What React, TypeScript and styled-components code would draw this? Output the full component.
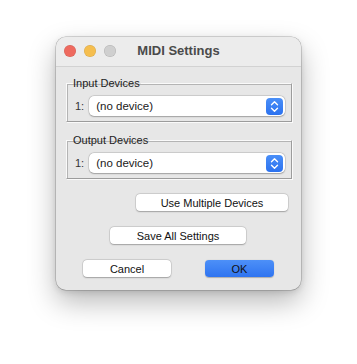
import React from "react";
import styled, { createGlobalStyle } from "styled-components";

const Global = createGlobalStyle`
  html, body { margin: 0; padding: 0; background: #ffffff; }
  body { font-family: "Liberation Sans", Arial, sans-serif; -webkit-font-smoothing: antialiased; }
`;

const Page = styled.div`
  width: 357px;
  height: 364px;
  padding: 37px 0 0 56px;
  box-sizing: border-box;
`;

const Window = styled.div`
  width: 245px;
  height: 253px;
  box-sizing: border-box;
  background: #e7e7e7;
  border-radius: 10px;
  box-shadow: 0 0 0 0.5px rgba(0,0,0,0.28), 0 12px 28px rgba(0,0,0,0.28), 0 2px 6px rgba(0,0,0,0.12);
  overflow: hidden;
  display: flex;
  flex-direction: column;
`;

const TitleBar = styled.div`
  height: 29px;
  flex: none;
  background: #ececec;
  border-bottom: 1px solid #d2d2d2;
  display: flex;
  align-items: center;
  position: relative;
  padding-left: 8px;
  gap: 8px;
`;

const Light = styled.span<{ $c: string; $b: string }>`
  width: 12px;
  height: 12px;
  border-radius: 50%;
  background: ${(p) => p.$c};
  box-shadow: inset 0 0 0 0.5px ${(p) => p.$b};
  margin-top: -2px;
`;

const Title = styled.div`
  position: absolute;
  left: 0;
  right: 0;
  top: 0;
  bottom: 0;
  display: flex;
  align-items: center;
  justify-content: center;
  font-weight: bold;
  font-size: 13px;
  color: #4a4a4a;
  pointer-events: none;
  padding-bottom: 3px;
`;

const Body = styled.div`
  flex: 1;
  padding: 10px 9px 0 10px;
  display: flex;
  flex-direction: column;
`;

const Group = styled.fieldset`
  margin: 0 0 12px 0;
  padding: 6px 6px 5px 8px;
  border: 1px solid;
  border-color: #fafafa #9c9c9c #9c9c9c #fafafa;
  box-shadow: inset 1px 1px 0 #b4b4b4, 1px 1px 0 #fafafa;
  display: flex;
  align-items: center;
  gap: 5px;
  min-width: 0;
`;

const Legend = styled.legend`
  padding: 0 1px 0 0;
  margin-left: -2px;
  font-size: 11px;
  color: #222;
  line-height: 13px;
`;

const Index = styled.span`
  font-size: 11px;
  color: #333;
  flex: none;
`;

const Popup = styled.div`
  flex: 1;
  height: 20px;
  background: #ffffff;
  border-radius: 5px;
  box-shadow: 0 0 0 0.5px rgba(0,0,0,0.15), 0 0.5px 1.5px rgba(0,0,0,0.25);
  display: flex;
  align-items: center;
  justify-content: space-between;
  padding: 0 2px 0 7px;
  font-size: 11.5px;
  color: #1a1a1a;
`;

const Stepper = styled.span`
  width: 17px;
  height: 17px;
  border-radius: 4px;
  background: linear-gradient(#4a8ff8, #2c72ef);
  display: flex;
  align-items: center;
  justify-content: center;
`;

const Row = styled.div<{ $pl: number; $mt: number }>`
  display: flex;
  padding-left: ${(p) => p.$pl}px;
  margin-top: ${(p) => p.$mt}px;
  gap: 34px;
`;

const Button = styled.button<{ $w: number; $primary?: boolean }>`
  width: ${(p) => p.$w}px;
  height: 17px;
  border: none;
  border-radius: 4px;
  padding: 0;
  font-family: "Liberation Sans", Arial, sans-serif;
  font-size: 11px;
  color: #111;
  background: ${(p) => (p.$primary ? "linear-gradient(#4d90f8, #2f74f0)" : "#ffffff")};
  box-shadow: ${(p) =>
    p.$primary
      ? "0 0.5px 1px rgba(0,0,0,0.25)"
      : "0 0 0 0.5px rgba(0,0,0,0.14), 0 0.5px 1.5px rgba(0,0,0,0.25)"};
`;

function Chevrons() {
  return (
    <svg width="9" height="13" viewBox="0 0 9 13" fill="none">
      <path d="M1.5 4.8 L4.5 1.8 L7.5 4.8" stroke="#fff" strokeWidth="1.4" strokeLinecap="round" strokeLinejoin="round" />
      <path d="M1.5 8.2 L4.5 11.2 L7.5 8.2" stroke="#fff" strokeWidth="1.4" strokeLinecap="round" strokeLinejoin="round" />
    </svg>
  );
}

function DeviceGroup({ title }: { title: string }) {
  return (
    <Group>
      <Legend>{title}</Legend>
      <Index>1:</Index>
      <Popup>
        <span>(no device)</span>
        <Stepper>
          <Chevrons />
        </Stepper>
      </Popup>
    </Group>
  );
}

export default function App() {
  return (
    <>
      <Global />
      <Page>
        <Window>
          <TitleBar>
            <Light $c="#ee6a5f" $b="rgba(0,0,0,0.12)" />
            <Light $c="#f5be4f" $b="rgba(0,0,0,0.12)" />
            <Light $c="#cfcfcf" $b="rgba(0,0,0,0.15)" />
            <Title>MIDI Settings</Title>
          </TitleBar>
          <Body>
            <DeviceGroup title="Input Devices" />
            <DeviceGroup title="Output Devices" />
            <Row $pl={70} $mt={3}>
              <Button $w={152}>Use Multiple Devices</Button>
            </Row>
            <Row $pl={44} $mt={16}>
              <Button $w={136}>Save All Settings</Button>
            </Row>
            <Row $pl={17} $mt={16}>
              <Button $w={88}>Cancel</Button>
              <Button $w={69} $primary>OK</Button>
            </Row>
          </Body>
        </Window>
      </Page>
    </>
  );
}
